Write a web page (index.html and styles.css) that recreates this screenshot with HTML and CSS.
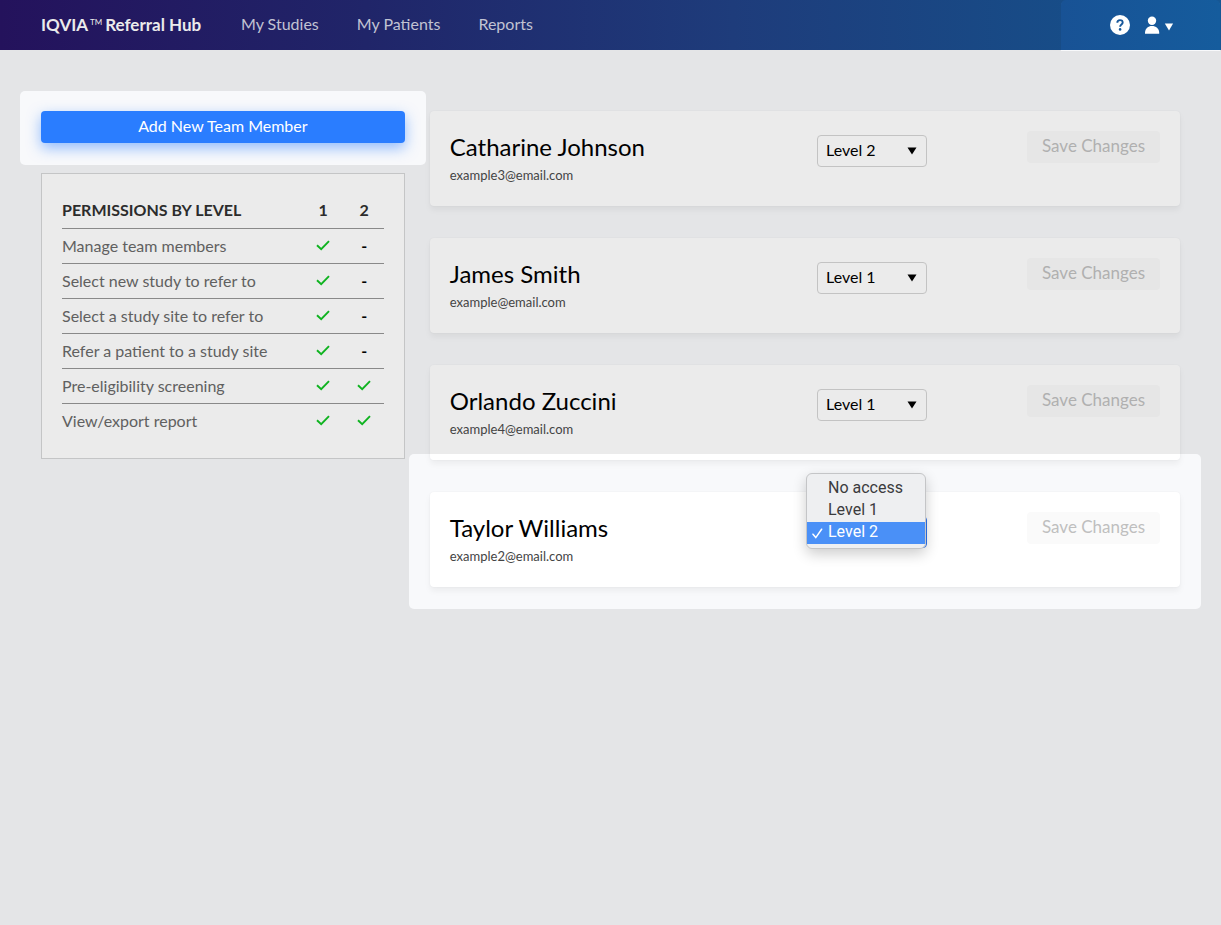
FILE: index.html
```
<!DOCTYPE html>
<html lang="en">
<head>
<meta charset="utf-8">
<title>IQVIA Referral Hub</title>
<link rel="stylesheet" href="styles.css">
</head>
<body>
<svg class="defs" width="0" height="0" aria-hidden="true">
  <symbol id="check" viewBox="0 0 14 11"><path d="M1 5.200 5.200 9.200 13 1.200" fill="none" stroke="#0fb320" stroke-width="1.900"/></symbol>
</svg>
<header class="topbar">
  <a class="brand" href="#"><span>IQVIA</span><span class="brand-tm">TM</span><span>Referral Hub</span></a>
  <nav class="nav">
    <a href="#">My Studies</a>
    <a href="#">My Patients</a>
    <a href="#">Reports</a>
  </nav>
  <div class="tools">
    <button class="icon-button" type="button" aria-label="Help">
      <svg width="20" height="20" viewBox="0 0 20 20"><circle cx="10" cy="10" r="10" fill="#fff"/><path d="M7.300 7.700C7.300 6 8.400 5.100 10 5.100s2.700.9 2.700 2.400c0 2-2.600 2-2.600 4.200" fill="none" stroke="#17579a" stroke-width="1.900"/><circle cx="10.100" cy="14.400" r="1.300" fill="#17579a"/></svg>
    </button>
    <button class="icon-button" type="button" aria-label="Account">
      <svg width="30" height="20" viewBox="0 0 30 20"><circle cx="7" cy="5.700" r="4.200" fill="#fff"/><path d="M0 18.800v-1.300C.3 13.500 3 11 7 11s7 2.500 7.200 6.500v1.300z" fill="#fff"/><path d="M19.800 8.500h8.300l-4.100 7z" fill="#fff"/></svg>
    </button>
  </div>
</header>

<main class="layout">
  <aside class="sidebar">
    <div class="spotlight">
      <button class="add-button" type="button">Add New Team Member</button>
    </div>
    <section class="permissions">
      <table class="levels">
        <thead><tr><th scope="col">PERMISSIONS BY LEVEL</th><th scope="col" class="level">1</th><th scope="col" class="level">2</th></tr></thead>
        <tbody>
          <tr><td>Manage team members</td><td class="level"><svg class="tick" role="img" aria-label="Yes"><use href="#check"/></svg></td><td class="level">-</td></tr>
          <tr><td>Select new study to refer to</td><td class="level"><svg class="tick" role="img" aria-label="Yes"><use href="#check"/></svg></td><td class="level">-</td></tr>
          <tr><td>Select a study site to refer to</td><td class="level"><svg class="tick" role="img" aria-label="Yes"><use href="#check"/></svg></td><td class="level">-</td></tr>
          <tr><td>Refer a patient to a study site</td><td class="level"><svg class="tick" role="img" aria-label="Yes"><use href="#check"/></svg></td><td class="level">-</td></tr>
          <tr><td>Pre-eligibility screening</td><td class="level"><svg class="tick" role="img" aria-label="Yes"><use href="#check"/></svg></td><td class="level"><svg class="tick" role="img" aria-label="Yes"><use href="#check"/></svg></td></tr>
          <tr><td>View/export report</td><td class="level"><svg class="tick" role="img" aria-label="Yes"><use href="#check"/></svg></td><td class="level"><svg class="tick" role="img" aria-label="Yes"><use href="#check"/></svg></td></tr>
        </tbody>
      </table>
    </section>
  </aside>

  <section class="members">
    <article class="card">
      <div class="person"><h2 class="name">Catharine Johnson</h2><p class="email">example3@email.com</p></div>
      <div class="access"><select class="select" aria-label="Access for Catharine Johnson"><option>No access</option><option>Level 1</option><option selected>Level 2</option></select></div>
      <button class="save" type="button" disabled>Save Changes</button>
    </article>
    <article class="card">
      <div class="person"><h2 class="name">James Smith</h2><p class="email">example@email.com</p></div>
      <div class="access"><select class="select" aria-label="Access for James Smith"><option>No access</option><option selected>Level 1</option><option>Level 2</option></select></div>
      <button class="save" type="button" disabled>Save Changes</button>
    </article>
    <article class="card card-edge">
      <div class="person"><h2 class="name">Orlando Zuccini</h2><p class="email">example4@email.com</p></div>
      <div class="access"><select class="select" aria-label="Access for Orlando Zuccini"><option>No access</option><option selected>Level 1</option><option>Level 2</option></select></div>
      <button class="save" type="button" disabled>Save Changes</button>
    </article>
    <div class="spotlight spotlight-tall">
      <article class="card card-active">
        <div class="person"><h2 class="name">Taylor Williams</h2><p class="email">example2@email.com</p></div>
        <div class="access">
          <select class="select" aria-label="Access for Taylor Williams"><option>No access</option><option>Level 1</option><option selected>Level 2</option></select>
          <ul class="menu" role="listbox" aria-label="Access level">
            <li class="option" role="option">No access</li>
            <li class="option" role="option">Level 1</li>
            <li class="option option-selected" role="option" aria-selected="true"><svg class="option-tick" width="11" height="11" viewBox="0 0 11 11"><path d="M1 6.200 3.800 9.600 9.600 1.200" fill="none" stroke="#fff" stroke-width="1.500" stroke-linecap="round"/></svg>Level 2</li>
          </ul>
        </div>
        <button class="save" type="button" disabled>Save Changes</button>
      </article>
    </div>
  </section>
</main>
</body>
</html>
```
FILE: styles.css
```
* { box-sizing: border-box; }

:root {
  --page: #f8f9fb;
  --page-dim: #e4e5e7;
  --card-dim: #ebebeb;
}

body {
  margin: 0;
  min-height: 100vh;
  background: var(--page-dim);
  color: #000;
  font: 16px/20px Lato, "Open Sans", sans-serif;
}

button, select { font: inherit; }
.defs { position: absolute; }

.topbar {
  display: flex;
  align-items: stretch;
  height: 50px;
  padding: 0 1px 0 41px;
  background: linear-gradient(90deg, #24125c, #202569 30%, #1e3c7b 60%, #174d88 88%, #165794);
}
.brand {
  display: flex;
  align-items: center;
  width: 200px;
  color: #ebebeb;
  font-size: 17px;
  font-weight: 700;
  text-decoration: none;
  white-space: nowrap;
}
.brand-tm {
  margin-bottom: 7px;
  padding: 0 3px 0 2px;
  font-size: 8px;
  font-weight: 400;
  line-height: 8px;
}
.nav { display: flex; align-items: center; gap: 38px; padding-bottom: 2px; }
.nav a { color: #c1c3d3; text-decoration: none; }
.tools {
  display: flex;
  align-items: center;
  gap: 15px;
  width: 159px;
  margin-left: auto;
  padding-left: 49px;
  border-radius: 5px 5px 0 0;
  background: linear-gradient(90deg, #185295, #155c9d);
  box-shadow: 0 1px #f8f9fb;
}
.icon-button {
  display: flex;
  padding: 0;
  border: 0;
  background: none;
}

.layout {
  display: grid;
  grid-template-columns: 32fr 66fr;
  gap: 25px;
  align-items: start;
  padding: 61px 41px 40px;
}

.spotlight { position: relative; z-index: 0; }
.spotlight::before {
  content: "";
  position: absolute;
  inset: -20px -21px -22px;
  z-index: -1;
  border-radius: 5px;
  background: var(--page);
}
.spotlight-tall::before { top: -38px; }

.add-button {
  display: block;
  width: 100%;
  height: 32px;
  padding: 0 0 2px;
  border: 0;
  border-radius: 4px;
  background: #2a7dff;
  color: #fff;
  box-shadow: 0 5px 14px rgba(42, 125, 255, 0.5);
}

.permissions {
  margin-top: 30px;
  padding: 19px 20px 20px;
  border: 1px solid #c4c5c6;
  background: var(--card-dim);
}
.levels { width: 100%; border-collapse: collapse; table-layout: fixed; }
.levels th, .levels td { height: 35px; padding: 0; text-align: left; }
.levels th { color: #2c2c2c; }
.levels td { color: #606060; }
.levels tbody tr { border-top: 1px solid #898989; }
.levels .level { width: 41px; padding-left: 2px; text-align: center; }
.levels td.level { color: #000; font-weight: 700; }
.tick { display: block; width: 14px; height: 11px; margin: 0 auto; }

.members { display: flex; flex-direction: column; gap: 32px; }
.card {
  position: relative;
  z-index: 1;
  display: flex;
  align-items: flex-start;
  min-height: 95px;
  padding: 20px 20px 16px;
  border-radius: 4px;
  background: var(--card-dim);
  box-shadow: 0 0 2px rgba(0, 0, 0, 0.06), 0 4px 6px rgba(0, 0, 0, 0.05);
}
.card-edge { background: linear-gradient(to top, #fff 6px, var(--card-dim) 6px); }
.card-active { background: #fff; }
.person { flex: 1; }
.name { margin: 2px 0 8px; font-size: 24px; font-weight: 400; line-height: 28px; }
.email { margin: 0; color: #444; font-size: 13px; line-height: 12px; }
.access { position: relative; margin: 4px 100px 0 0; }
.select {
  display: block;
  width: 110px;
  height: 32px;
  padding: 0 8px 2px;
  appearance: none;
  border: 1px solid #c3c3c3;
  border-radius: 4px;
  background: url("data:image/svg+xml,%3Csvg xmlns='http://www.w3.org/2000/svg' width='10' height='8'%3E%3Cpath d='M0.500 0.500h9L5 7.500z'/%3E%3C/svg%3E") no-repeat right 9px center;
  color: #000;
}
.card-active .select { border-color: #2a72f0; }
.save {
  width: 133px;
  height: 32px;
  padding: 0 0 2px;
  border: 0;
  border-radius: 4px;
  background: #e6e6e6;
  color: #b0b0b0;
  font-size: 17px;
}
.card-active .save { background: #fafafa; color: #bfbfbf; }

.menu {
  position: absolute;
  top: -43px;
  left: -11px;
  width: 120px;
  margin: 0;
  padding: 4px 0;
  border: 1px solid #c4c5c7;
  border-radius: 6px;
  background: #eeeff1;
  box-shadow: 0 5px 14px rgba(0, 0, 0, 0.2);
  list-style: none;
  font: 16px/22px Roboto, sans-serif;
}
.option {
  position: relative;
  height: 22px;
  padding-left: 21px;
  color: #3b3b3d;
  line-height: 20px;
}
.option-selected { background: #4a90f7; color: #fff; }
.option-tick { position: absolute; left: 5px; top: 6px; }
```
